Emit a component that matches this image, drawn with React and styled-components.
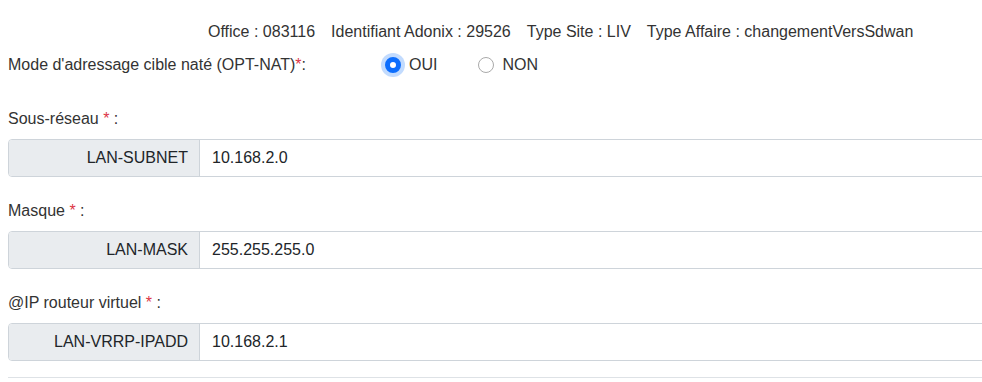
import React from 'react'
import styled, { createGlobalStyle } from 'styled-components'

const GlobalStyle = createGlobalStyle`
  html, body {
    margin: 0;
    padding: 0;
    background: #fff;
    overflow: hidden;
  }
  body {
    font-family: "Liberation Sans", Arial, sans-serif;
    font-size: 16px;
    color: #333;
  }
`

const fields = [
  { label: 'Sous-réseau', addon: 'LAN-SUBNET', value: '10.168.2.0' },
  { label: 'Masque', addon: 'LAN-MASK', value: '255.255.255.0' },
  { label: '@IP routeur virtuel', addon: 'LAN-VRRP-IPADD', value: '10.168.2.1' },
]

const App = () => {
  return (
    <Page>
      <GlobalStyle />
      <InfoBar>
        <span>Office : 083116</span>
        <span>Identifiant Adonix : 29526</span>
        <span>Type Site : LIV</span>
        <span>Type Affaire : changementVersSdwan</span>
      </InfoBar>
      <ModeRow>
        <span>Mode d'adressage cible naté (OPT-NAT)<Req>*</Req>:</span>
        <Radios>
          <RadioLabel>
            <Radio checked />
            OUI
          </RadioLabel>
          <RadioLabel>
            <Radio />
            NON
          </RadioLabel>
        </Radios>
      </ModeRow>
      {fields.map((f) => (
        <Field key={f.addon}>
          <FieldLabel>
            {f.label} <Req>*</Req> :
          </FieldLabel>
          <InputGroup>
            <Addon>{f.addon}</Addon>
            <Input>{f.value}</Input>
          </InputGroup>
        </Field>
      ))}
      <Rule />
    </Page>
  )
}

const Page = styled.div`
  padding: 0 0 0 8px;
  height: 382px;
  overflow: hidden;
`

const InfoBar = styled.div`
  display: flex;
  gap: 16px;
  padding: 23px 0 0 200px;
  line-height: 18px;
`

const ModeRow = styled.div`
  display: grid;
  grid-template-columns: 377px 1fr;
  align-items: center;
  margin-top: 14px;
  height: 20px;
`

const Req = styled.span`
  color: #dc3545;
`

const Radios = styled.div`
  display: flex;
  gap: 41px;
`

const RadioLabel = styled.label`
  display: flex;
  align-items: center;
  gap: 8px;
`

const Radio = styled.span`
  width: 16px;
  height: 16px;
  box-sizing: border-box;
  border-radius: 50%;
  border: ${(p) => (p.checked ? '5px solid #0d6efd' : '1px solid #aaa')};
  background: #fff;
  box-shadow: ${(p) => (p.checked ? '0 0 0 4px rgba(13, 110, 253, 0.25)' : 'none')};
`

const Field = styled.div`
  margin-top: 35px;
  & + & {
    margin-top: 25px;
  }
`

const FieldLabel = styled.div`
  line-height: 18px;
  margin-bottom: 11px;
`

const InputGroup = styled.div`
  display: flex;
  width: calc(100% + 40px);
  height: 38px;
  box-sizing: border-box;
  border: 1px solid #ced4da;
  border-radius: 4px;
  overflow: hidden;
`

const Addon = styled.div`
  width: 191px;
  box-sizing: border-box;
  background: #e9ecef;
  border-right: 1px solid #ced4da;
  display: flex;
  align-items: center;
  justify-content: flex-end;
  padding-right: 11px;
  color: #212529;
`

const Input = styled.div`
  flex: 1;
  display: flex;
  align-items: center;
  padding-left: 12px;
  color: #212529;
`

const Rule = styled.div`
  margin-top: 16px;
  border-top: 1px solid #dee2e6;
`

export default App
